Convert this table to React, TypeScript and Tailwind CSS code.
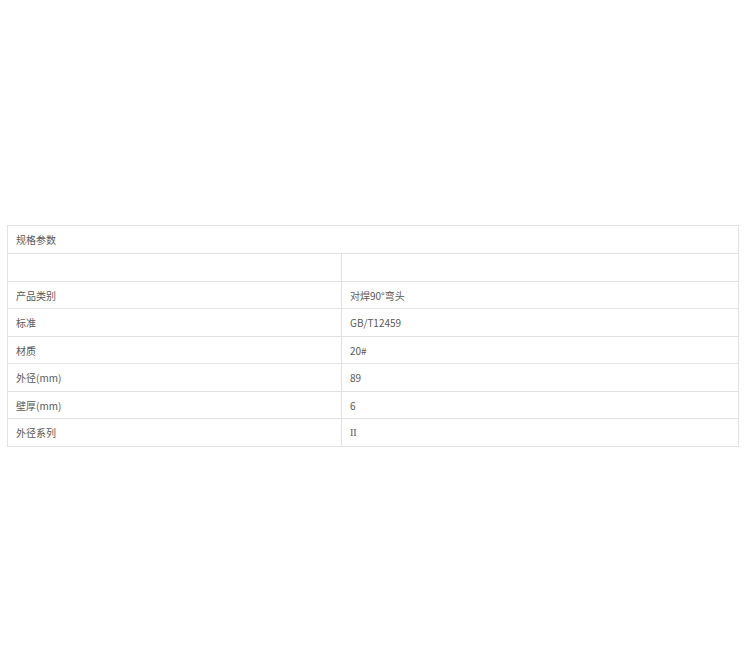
const rows: { label: string; value: string; h: string }[] = [
  { label: "", value: "", h: "h-[28px]" },
  { label: "产品类别", value: "对焊90°弯头", h: "h-[27px]" },
  { label: "标准", value: "GB/T12459", h: "h-[28px]" },
  { label: "材质", value: "20#", h: "h-[27px]" },
  { label: "外径(mm)", value: "89", h: "h-[28px]" },
  { label: "壁厚(mm)", value: "6", h: "h-[27px]" },
  { label: "外径系列", value: "II", h: "h-[27px]" },
];

export default function App() {
  return (
    <div
      className="min-h-[656px] w-[750px] bg-white pt-[225px] text-[10px] text-[#5a5a5a]"
      style={{ fontFamily: '"Noto Sans CJK SC", "Noto Sans", sans-serif' }}
    >
      <div className="ml-[7px] w-[732px] border border-[#e2e2e2]">
        <div className="flex h-[28px] items-center border-b border-[#e2e2e2] pl-[8px]">
          规格参数
        </div>
        {rows.map((row, i) => (
          <div
            key={i}
            className={`flex ${row.h} ${i < rows.length - 1 ? "border-b border-[#e2e2e2]" : ""}`}
          >
            <div className="flex w-[334px] items-center border-r border-[#e2e2e2] pl-[8px]">
              {row.label}
            </div>
            <div className="flex flex-1 items-center pl-[8px]">
              {row.value === "II" ? (
                <span style={{ fontFamily: '"Liberation Serif", serif' }}>II</span>
              ) : (
                row.value
              )}
            </div>
          </div>
        ))}
      </div>
    </div>
  );
}
